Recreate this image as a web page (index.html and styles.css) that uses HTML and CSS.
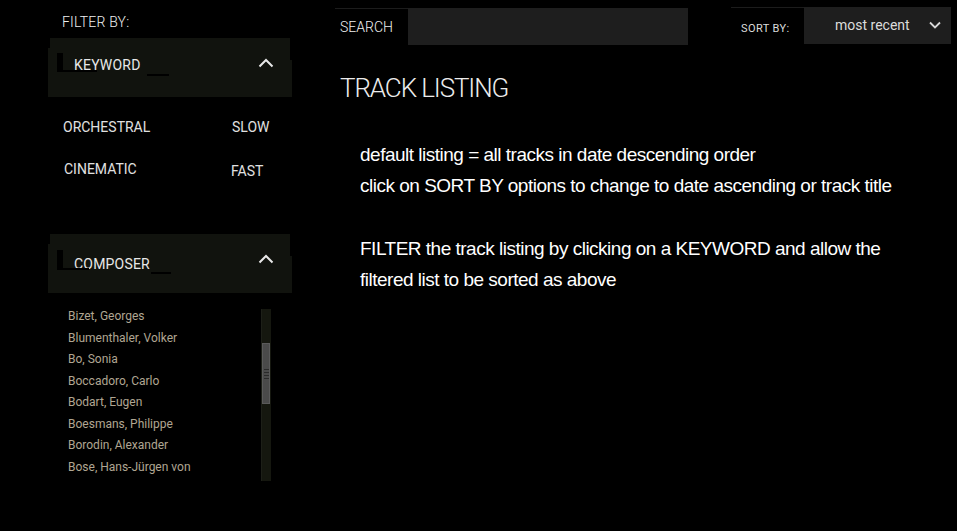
FILE: index.html
```html
<!DOCTYPE html>
<html>
<head>
<meta charset="utf-8">
<link rel="stylesheet" href="styles.css">
</head>
<body>
<div class="page">
  <aside class="sidebar">
    <div class="filter-title">FILTER BY:</div>
    <div class="panel-head">
      <span class="mark"></span>
      <span class="head-label">KEYWORD</span>
      <span class="tail"></span>
      <svg class="chev" width="16" height="10" viewBox="0 0 16 10"><path d="M1.5 8.5 L8 2 L14.5 8.5" fill="none" stroke="#e8e8e8" stroke-width="2"/></svg>
    </div>
    <div class="keywords">
      <span class="kw k1">ORCHESTRAL</span>
      <span class="kw k2">SLOW</span>
      <span class="kw k3">CINEMATIC</span>
      <span class="kw k4">FAST</span>
    </div>
    <div class="panel-head composer">
      <span class="mark"></span>
      <span class="head-label">COMPOSER</span>
      <span class="tail tight"></span>
      <svg class="chev" width="16" height="10" viewBox="0 0 16 10"><path d="M1.5 8.5 L8 2 L14.5 8.5" fill="none" stroke="#e8e8e8" stroke-width="2"/></svg>
    </div>
    <div class="composer-list">
      <ul class="names">
        <li>Bizet, Georges</li>
        <li>Blumenthaler, Volker</li>
        <li>Bo, Sonia</li>
        <li>Boccadoro, Carlo</li>
        <li>Bodart, Eugen</li>
        <li>Boesmans, Philippe</li>
        <li>Borodin, Alexander</li>
        <li>Bose, Hans-Jürgen von</li>
      </ul>
      <div class="scrollbar"><div class="thumb"><span></span><span></span><span></span><span></span></div></div>
    </div>
  </aside>
  <main class="main">
    <div class="toolbar">
      <div class="search">
        <span class="search-label">SEARCH</span>
        <div class="search-input"></div>
      </div>
      <div class="sort">
        <span class="sort-label">SORT BY:</span>
        <div class="sort-select">
          <span>most recent</span>
          <svg width="12" height="8" viewBox="0 0 12 8"><path d="M1 1.5 L6 6.5 L11 1.5" fill="none" stroke="#d8d8d8" stroke-width="1.8"/></svg>
        </div>
      </div>
    </div>
    <h1 class="title">TRACK LISTING</h1>
    <div class="notes">
      <p>default listing = all tracks in date descending order<br>click on SORT BY options to change to date ascending or track title</p>
      <p>FILTER the track listing by clicking on a KEYWORD and allow the<br>filtered list to be sorted as above</p>
    </div>
  </main>
</div>
</body>
</html>
```
FILE: styles.css
```css
html, body {
  margin: 0;
  padding: 0;
  background: #000;
  height: 100%;
}
body {
  font-family: Roboto, "Liberation Sans", sans-serif;
  color: #e6e6e6;
}
.page {
  display: flex;
  height: 531px;
  overflow: hidden;
}
.sidebar {
  margin-left: 48px;
  width: 244px;
  flex: none;
}
.filter-title {
  font-size: 14px;
  font-weight: 300;
  color: #f0f0f0;
  padding: 14px 0 0 14px;
  height: 24px;
  box-sizing: border-box;
  height: 38px;
  letter-spacing: 0.2px;
}
.panel-head {
  position: relative;
  height: 59px;
  background: #11130e;
  display: flex;
  align-items: center;
  padding-left: 26px;
  box-sizing: border-box;
}
.panel-head::before {
  content: "";
  position: absolute;
  left: 0;
  top: 0;
  width: 2px;
  height: 10px;
  background: #000;
}
.panel-head::after {
  content: "";
  position: absolute;
  right: 0;
  top: 0;
  width: 2px;
  height: 22px;
  background: #000;
}
.panel-head .mark {
  position: absolute;
  left: 9px;
  top: 15px;
  width: 6px;
  height: 19px;
  background: #000;
}
.panel-head .mark::after {
  content: "";
  position: absolute;
  left: 0;
  top: 17px;
  width: 40px;
  height: 2px;
  background: #000;
}
.composer .mark { top: 16px; }
.composer .mark::after { width: 32px; top: 18px; }
.head-label {
  font-size: 14px;
  color: #e8e8e8;
  letter-spacing: 0.2px;
  margin-top: -6px;
}
.composer .head-label { margin-top: 0; }
.tail {
  width: 22px;
  height: 2px;
  background: #000;
  margin-left: 6px;
  margin-top: 14px;
}
.composer .tail { margin-left: 1px; margin-top: 18px; width: 20px; }
.chev {
  position: absolute;
  right: 18px;
  top: 20px;
}
.keywords {
  display: grid;
  grid-template-columns: 169px 60px;
  grid-template-rows: 42px 42px;
  padding: 22px 0 0 15px;
  height: 115px;
  box-sizing: border-box;
  margin-bottom: 22px;
}
.kw {
  font-size: 14px;
  color: #e0e0e0;
}
.k3 { padding-left: 1px; }
.k4 { margin-left: -1px; padding-top: 2px; }
.composer-list {
  display: flex;
  margin-top: 16px;
  height: 172px;
}
.names {
  list-style: none;
  margin: 0;
  padding: 0 0 0 20px;
  width: 193px;
  font-size: 12px;
  color: #b0a692;
}
.names li {
  height: 21.5px;
  line-height: 14px;
}
.scrollbar {
  width: 9px;
  background: #15170f;
  position: relative;
  border-left: 1px solid #1d1f18;
}
.thumb {
  position: absolute;
  left: 0;
  top: 34px;
  width: 8px;
  height: 61px;
  background: #4a4a4a;
  border: 1px solid #5a5a5a;
  box-sizing: border-box;
  display: flex;
  flex-direction: column;
  justify-content: center;
  gap: 2px;
  padding-left: 1px;
}
.thumb span {
  display: block;
  width: 5px;
  height: 1px;
  background: #2a2a2a;
}
.main {
  margin-left: 43px;
  flex: 1;
}
.toolbar {
  display: flex;
  align-items: flex-start;
}
.search {
  display: flex;
  margin-top: 8px;
  height: 37px;
}
.search-label {
  width: 73px;
  box-sizing: border-box;
  padding: 10px 0 0 5px;
  font-size: 14px;
  font-weight: 300;
  color: #f0f0f0;
  border-top: 1px solid #1c1c1c;
}
.search-input {
  width: 280px;
  background: #1e1e1e;
}
.sort {
  display: flex;
  margin-left: 43px;
  margin-top: 7px;
  height: 37px;
}
.sort-label {
  width: 73px;
  box-sizing: border-box;
  padding: 14px 0 0 10px;
  font-size: 11px;
  color: #dcdcdc;
  letter-spacing: 0.4px;
  border-top: 1px solid #1c1c1c;
}
.sort-select {
  width: 147px;
  background: #1e1e1e;
  display: flex;
  align-items: flex-start;
  box-sizing: border-box;
  padding: 10px 10px 0 31px;
  justify-content: space-between;
  font-size: 14px;
  color: #dcdcdc;
}
.sort-select svg { margin-top: 4px; }
.title {
  margin: 28px 0 0 5px;
  font-size: 26px;
  font-weight: 300;
  color: #ececec;
  letter-spacing: -1.1px;
}
.notes {
  margin: 36px 0 0 25px;
  font-family: "Liberation Sans", Arial, sans-serif;
  font-size: 19px;
  line-height: 31px;
  letter-spacing: -0.5px;
  color: #fff;
}
.notes p {
  margin: 0 0 32px 0;
}
```
